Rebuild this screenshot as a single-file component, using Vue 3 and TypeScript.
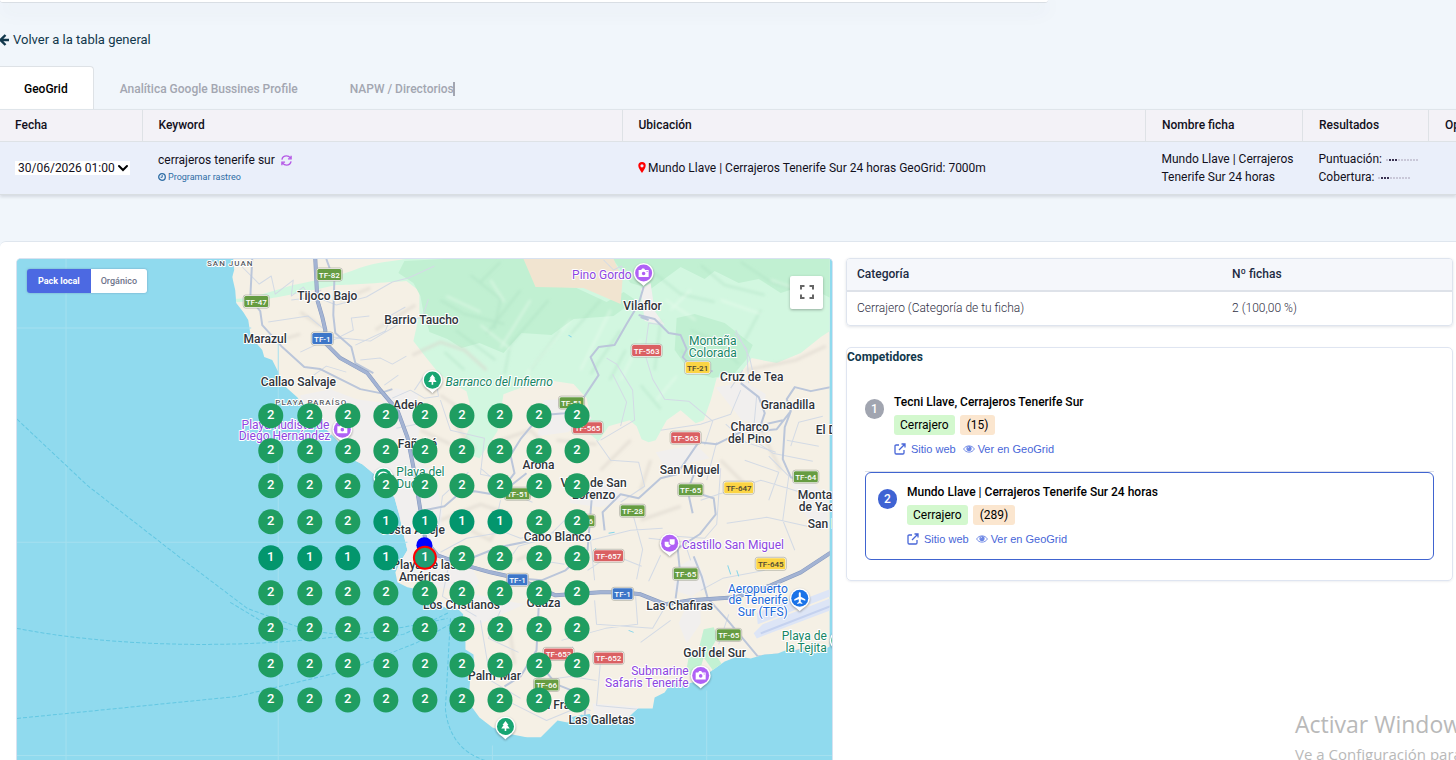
<script setup lang="ts">
import { ref } from 'vue'

interface Label { t: string; x: number; y: number; k?: string; a?: 'start' | 'middle' | 'end'; s?: number }
interface Shield { t: string; x: number; y: number; c: 'green' | 'blue' | 'red' | 'yellow' }
interface Poi { x: number; y: number; kind: 'tree' | 'camera' | 'mask' | 'plane' | 'beach' }
interface Rival { pos: number; name: string; category: string; reviews: number; own: boolean }

const mode = ref<'local' | 'organic'>('local')
const date = ref('30/06/2026 01:00')

const rivals: Rival[] = [
  { pos: 1, name: 'Tecni Llave, Cerrajeros Tenerife Sur', category: 'Cerrajero', reviews: 15, own: false },
  { pos: 2, name: 'Mundo Llave | Cerrajeros Tenerife Sur 24 horas', category: 'Cerrajero', reviews: 289, own: true },
]

const xs = [270, 309, 347, 385, 424, 461, 499, 538, 576]
const ys = [415, 450, 485, 521, 557, 592, 628, 664, 699]
const ranks = [
  '222222222', '222222222', '222222222', '222111122', '111112222',
  '222222222', '222222222', '222222222', '222222222',
]
const pins = ranks.flatMap((row, r) =>
  [...row].map((n, c) => ({ x: xs[c], y: ys[r], n, center: r === 4 && c === 4 })))

const labels: Label[] = [
  { t: 'SAN JUAN', x: 230, y: 266, k: 'area', a: 'middle' },
  { t: 'Tijoco Bajo', x: 327, y: 300 },
  { t: 'Barrio Taucho', x: 421, y: 324 },
  { t: 'Marazul', x: 265, y: 343 },
  { t: 'Callao Salvaje', x: 298, y: 386 },
  { t: 'PLAYA PARAÍSO', x: 311, y: 405, k: 'area' },
  { t: 'Adeje', x: 408, y: 409 },
  { t: 'Fañabé', x: 417, y: 448 },
  { t: 'Arona', x: 538, y: 469 },
  { t: 'Valle de San', x: 593, y: 487 },
  { t: 'Lorenzo', x: 593, y: 499 },
  { t: 'Costa Adeje', x: 412, y: 534 },
  { t: 'Cabo Blanco', x: 557, y: 541 },
  { t: 'Playa de las', x: 424, y: 569 },
  { t: 'Américas', x: 424, y: 581 },
  { t: 'Los Cristianos', x: 461, y: 609 },
  { t: 'Guaza', x: 543, y: 607 },
  { t: 'Palm-Mar', x: 494, y: 680 },
  { t: 'El Fraile', x: 561, y: 709 },
  { t: 'Las Galletas', x: 601, y: 724 },
  { t: 'Vilaflor', x: 642, y: 310 },
  { t: 'Cruz de Tea', x: 751, y: 381 },
  { t: 'Granadilla', x: 787, y: 409 },
  { t: 'Charco', x: 749, y: 431 },
  { t: 'del Pino', x: 749, y: 443 },
  { t: 'El Desierto', x: 815, y: 434, a: 'start' },
  { t: 'San Miguel', x: 689, y: 474 },
  { t: 'Montaña', x: 797, y: 499, a: 'start' },
  { t: 'de Yaco', x: 798, y: 511, a: 'start' },
  { t: 'San Isidro', x: 807, y: 528, a: 'start' },
  { t: 'Las Chafiras', x: 679, y: 610 },
  { t: 'Golf del Sur', x: 714, y: 657 },
  { t: 'Pino Gordo', x: 631, y: 279, k: 'violet', a: 'end' },
  { t: 'Playa nudista de', x: 329, y: 429, k: 'violet', a: 'end' },
  { t: 'Diego Hernández', x: 330, y: 440, k: 'violet', a: 'end' },
  { t: 'Castillo San Miguel', x: 681, y: 549, k: 'violet', a: 'start' },
  { t: 'Submarine', x: 688, y: 675, k: 'violet', a: 'end' },
  { t: 'Safaris Tenerife', x: 688, y: 687, k: 'violet', a: 'end' },
  { t: 'Barranco del Infierno', x: 445, y: 386, k: 'park slanted', a: 'start' },
  { t: 'Playa del', x: 396, y: 476, k: 'park', a: 'start' },
  { t: 'Duque', x: 396, y: 488, k: 'park', a: 'start' },
  { t: 'Montaña', x: 712, y: 345, k: 'park' },
  { t: 'Colorada', x: 712, y: 357, k: 'park' },
  { t: 'Playa de', x: 826, y: 640, k: 'park', a: 'end' },
  { t: 'la Tejita', x: 826, y: 652, k: 'park', a: 'end' },
  { t: 'Aeropuerto', x: 787, y: 593, k: 'air', a: 'end' },
  { t: 'de Tenerife', x: 787, y: 604, k: 'air', a: 'end' },
  { t: 'Sur (TFS)', x: 787, y: 616, k: 'air', a: 'end' },
]

const shields: Shield[] = [
  { t: 'TF-82', x: 329, y: 274, c: 'green' },
  { t: 'TF-47', x: 256, y: 301, c: 'green' },
  { t: 'TF-1', x: 322, y: 338, c: 'blue' },
  { t: 'TF-563', x: 646, y: 350, c: 'red' },
  { t: 'TF-21', x: 697, y: 367, c: 'yellow' },
  { t: 'TF-51', x: 571, y: 402, c: 'green' },
  { t: 'TF-565', x: 587, y: 427, c: 'red' },
  { t: 'TF-563', x: 685, y: 437, c: 'red' },
  { t: 'TF-64', x: 805, y: 476, c: 'green' },
  { t: 'TF-65', x: 690, y: 489, c: 'green' },
  { t: 'TF-647', x: 738, y: 487, c: 'yellow' },
  { t: 'TF-51', x: 517, y: 493, c: 'green' },
  { t: 'TF-28', x: 632, y: 510, c: 'green' },
  { t: 'TF-66', x: 582, y: 520, c: 'green' },
  { t: 'TF-657', x: 608, y: 555, c: 'red' },
  { t: 'TF-645', x: 770, y: 563, c: 'yellow' },
  { t: 'TF-65', x: 685, y: 573, c: 'green' },
  { t: 'TF-1', x: 517, y: 579, c: 'blue' },
  { t: 'TF-1', x: 622, y: 593, c: 'blue' },
  { t: 'TF-65', x: 728, y: 634, c: 'green' },
  { t: 'TF-653', x: 558, y: 653, c: 'red' },
  { t: 'TF-652', x: 608, y: 657, c: 'red' },
  { t: 'TF-66', x: 546, y: 684, c: 'green' },
]

const pois: Poi[] = [
  { x: 643, y: 273, kind: 'camera' },
  { x: 342, y: 429, kind: 'camera' },
  { x: 432, y: 380, kind: 'tree' },
  { x: 383, y: 477, kind: 'beach' },
  { x: 669, y: 543, kind: 'mask' },
  { x: 799, y: 598, kind: 'plane' },
  { x: 700, y: 675, kind: 'camera' },
  { x: 505, y: 726, kind: 'tree' },
  { x: 839, y: 640, kind: 'beach' },
]

const shieldWidth = (t: string) => (t.length === 4 ? 20 : t.length === 5 ? 24 : 29)
</script>

<template>
  <div class="page">
    <div class="upper-card"></div>

    <a class="back" href="#">
      <svg width="10" height="12" viewBox="0 0 10 12" aria-hidden="true"><path d="M5.500 1 .5 6l5 5M1 6h8" fill="none" stroke="currentColor" stroke-width="2.4" /></svg>
      <span>Volver a la tabla general</span>
    </a>

    <nav class="tabs">
      <button class="tab active" type="button">GeoGrid</button>
      <button class="tab" type="button">Analítica Google Bussines Profile</button>
      <button class="tab caret" type="button">NAPW / Directorios</button>
    </nav>

    <div class="scans-wrap">
      <table class="scans">
        <colgroup><col class="c-date"><col class="c-key"><col><col class="c-name"><col class="c-res"><col class="c-opt"></colgroup>
        <thead>
          <tr><th>Fecha</th><th>Keyword</th><th>Ubicación</th><th>Nombre ficha</th><th>Resultados</th><th>Opciones</th></tr>
        </thead>
        <tbody>
          <tr>
            <td>
              <span class="date-box">
                <select v-model="date" aria-label="Fecha"><option>30/06/2026 01:00</option></select>
                <svg width="12" height="8" viewBox="0 0 12 8" aria-hidden="true"><path d="m2 2 4 4 4-4" fill="none" stroke="#000" stroke-width="2" stroke-linecap="round" /></svg>
              </span>
            </td>
            <td>
              <div class="keyword">
                cerrajeros tenerife sur
                <svg width="11" height="11" viewBox="0 0 12 12" aria-hidden="true"><path d="M1 5C1.500 2.500 3.500 1 6 1c1.800 0 3.200.8 4.200 2.200M11 .8v3.400H7.600M11 7c-.5 2.500-2.500 4-5 4-1.800 0-3.200-.8-4.200-2.200M1 11.200V7.800h3.400" fill="none" stroke="#b558e6" stroke-width="1.500" /></svg>
              </div>
              <a class="schedule" href="#">
                <svg width="8" height="8" viewBox="0 0 8 8" aria-hidden="true"><circle cx="4" cy="4" r="3.300" fill="none" stroke="currentColor" stroke-width="1.300" /><path d="M4.200 2v2.300H2.600" fill="none" stroke="currentColor" /></svg>
                Programar rastreo
              </a>
            </td>
            <td>
              <span class="place">
                <svg width="8" height="11" viewBox="0 0 8 11" aria-hidden="true"><path fill-rule="evenodd" d="M4 0a3.700 3.700 0 0 1 3.700 3.700C7.700 6 5.500 8.500 4 11 2.500 8.500.3 6 .3 3.700A3.700 3.700 0 0 1 4 0zm0 2.200a1.600 1.600 0 1 0 0 3.200 1.600 1.600 0 0 0 0-3.200z" fill="#f00" /></svg>
                <span>Mundo Llave | Cerrajeros Tenerife Sur 24 horas GeoGrid: 7000m</span>
              </span>
            </td>
            <td>Mundo Llave | Cerrajeros Tenerife Sur 24 horas</td>
            <td>
              <div v-for="r in ['Puntuación:', 'Cobertura:']" :key="r" class="result">
                {{ r }}
                <svg width="32" height="4" viewBox="0 0 32 4" aria-hidden="true">
                  <rect v-for="i in 11" :key="i" :x="(i - 1) * 3" y="1" width="2" height="2" :fill="i > 1 && i < 5 ? '#3b3352' : '#c9c8d8'" />
                </svg>
              </div>
            </td>
            <td></td>
          </tr>
        </tbody>
      </table>
    </div>

    <main class="board">
      <section class="map">
        <svg class="canvas" viewBox="17 259 815 501" preserveAspectRatio="xMinYMin slice" role="img" aria-label="Mapa de Tenerife Sur">
          <defs>
            <filter id="soft" x="-5%" y="-5%" width="110%" height="110%"><feGaussianBlur stdDeviation="1.500" /></filter>
            <clipPath id="land">
              <path d="M233 259l1 11-2 7 3 13 1 13 7 9 5 8 2 13 6 10 6 7 2 7 8 3 6 12 2 10 8 7 9 8 8 12 15 14 18 18 14 18 10 5 12 10 12 14 8 9 5 18 3 14 5 21-6 10-6 12 2 10 10 5 10 2 12 8 8 7 10 4 8-2 8 8-1 15 3 8v12l8 5 1 12-4 8-1 15 2 17 8 11 13 10 20 7 15 3h13l10-10 7-7 10 2 14-8 12 4 8-2 13 1 6 7 17-16h15l2-11 10-5 6-9h17l10-2 13-10 14-10 13-5 13 2 14-4 13-1 10-4 17 1 11 3 14-7V250H233z" />
            </clipPath>
          </defs>
          <rect x="0" y="240" width="860" height="540" fill="#90daee" />
          <g clip-path="url(#land)">
            <rect x="220" y="250" width="640" height="520" fill="#f5f0e5" />
            <path class="mint" d="M232 299c22 0 42-9 61-14 24-5 48-9 66-17 18-6 34-7 46-9h430v68l-15 10-20 16-24 10-25-5-11 15-24 5-6 22-7 20-8 3-15-13-14 10-11 20-7 2-7-3-5-13-7-6-21 6-10 15-12-10 3-20-3-13-13-14-20-3-34 7-16 6-6 37-18 27-20-7 14-33-7-27-13-7-14-10-13-16-13-17 6-27v-23l-13-10c-30 2-56 4-70 4-32 7-50 11-70 14-12 3-24 3-34 3z" />
            <path class="mint deep" d="M404 261l40-2h80l12 26 40 3 30 14 17-10 12 8-22 16-40 3-22 16-30-2-18 20-24-10-18 5-14-9-18-7-6-20-3-16-7-13-15-10z" />
            <path class="mint deep" d="M612 259h220v40l-28-14-24 8-22-14-20 4-24-12-10 8-24-12-30 22-20-6zM676 318l18-4 30 9 28 22-6 14-12 14-22 5-24-8-14-20z" />
            <path d="M523 259h90l9 20-2 25-37-16-48-1z" fill="#f1e4d0" />
            <path d="M366 410l9 1 2 15-4 12-12 7-6-12 7-12zM703 629l10-2 4 10-6 10 12 20-10 4-10-14-6 20-12-4 3-16 10-8z" fill="#c3f1d3" />
            <g fill="#f1efee">
              <path d="M300 395l30-6 26 10 30 4 22 0 14 12-6 30 12 30 4 40-10 28 12 24-20 8-26-10-4-32-9-28-30-30-40-40zM402 470l30-3 10 45-3 40 30 10 10 20-10 10-38-6-26-20zM380 398l16-10 22 6-4 24-18-2zM543 400l32-2 16 20-24 14-30 4zM566 484l44-3 14 18-24 8-30-4zM640 289l10-6 4 28 10 14-20-4zM675 568l20-12 12 30-16 10-18-6zM690 596l10 3 0 24-14 20-8-20zM715 387l30-5 20 12-4 30-20-4zM592 703l46 3-3 12-16 12-24-10zM655 452l40-8 14 14-44 10z" />
              <path d="M790 482l20-3 16 20 0 26-20-8zM440 604l34-10 50 10-40 18-20 5z" />
            </g>
            <g filter="url(#soft)" fill="none" stroke="#d9d3ca" stroke-opacity=".55" stroke-width="3">
              <path d="M412 355l28-13 24 8 22 20M375 330l40-25M340 300l30-12M300 312l20 14M440 395l32 22M500 440l30-10 20 20M490 620l20 14 4 30M516 560l30-14M440 520l40-16 30 10M455 425l20 24M600 470l30-30M650 460l-10 30M560 540l30-20M720 460l30 30M760 430l20 40M640 520l40-14M556 440l40 4M745 370l50-10 30-14M470 530l20 10 10-20M280 340l20-6M420 430l30 14" />
            </g>
            <g filter="url(#soft)" fill="none" stroke="#a7dcbc" stroke-opacity=".45" stroke-width="2">
              <path d="M440 300l24 14 40 10M470 275l30 24-6 30M520 290l-34 44M548 300l-38 44-6 30M560 330l-30 40M600 300l-30 34M620 330l-30 44M650 270l30 24 34 8M700 265l24 20 40 10M740 262l30 20 50 16M690 330l24 10 24 24M680 350l20 20M760 310l-16 30M660 320l-6 50M625 350l-16 30M640 385l20 24M500 262l-20 20M455 330l40 30M444 352l20 18" />
            </g>
            <g filter="url(#soft)" fill="none" stroke="#effdf2" stroke-opacity=".5" stroke-width="2">
              <path d="M446 296l34 16M480 325l30 24M530 300l-30 48M570 320l-44 54M610 310l-30 60M665 300l30 20M720 300l40 14M770 280l40 14M690 290l-20 20M640 340l-20 40M676 376l-20 24M490 280l14 22" />
            </g>
            <g class="minor">
              <path d="M239 264l20 20 12-8 4 18 18-14-2 16 12-9 6 9 12-6M291 300l25-3 20 8 30-8 26-15 16-4 26-12M268 322l40-6 18 15M300 352l32-15 38 4 30-18 22-6 6-18M333 340l20-10-2-12 18-2M355 345l30-14 6-16 14-8M346 372l-20-6-14 10M360 360l20-2 12 6 14-8M392 398l18-8 14 8 14-2-2-14-14-4-8 12M384 385l14-10M420 406l-4 18-20 4M440 400l10 30 34 8-4 36 28 6M468 472l-26 24-4 30M480 468l28 24 24 10M500 500l-6 28 26 10 36-6M508 560l10-14 28-8 20-20M440 552l26-14 36-6M596 440l14 20 28 2 6 24-24 16M600 440l34-20-2-30-16-26-10-6M648 323l-4 30 8 26 12 20 24 2 24 20-8 24M648 323l14 2M660 430l40-6 30-10 10-24M725 424l20 18 30 10M716 442l-10 38M744 460l34 12-10 28M700 500l60-20 40 12M768 456l20 20-6 44 12 30M720 468l-4 56-12 14-30-2M726 523l40-6 54 12M590 540l4 40M590 540l40-10 32-2M632 513l10 36-6 30M587 570l24-16 30 12M660 555l-12 26M690 560l-6-18-36-4M640 642l30-22M594 600l2 24 56 4 14-24M561 640l44-12 32-4-2-28M572 646l-2 30-30 4M600 660l-4 45 44 4M570 676l26 4M700 590l22-12 42-8M728 614l-10 30M500 610l-12 28 30 14M480 620l10 60 30 18M506 700l40 20 24-10M560 700l30 10" />
              <path d="M603 260l10 10 8-4 4 12 14-6M735 330l14 28 4 18M748 383l-2-34-12-16M742 370l-12 18M822 416l-24 6-8 24M818 446l-32-6M612 374l14 28-6 24M756 395l-4 44 20 14 40 8M538 560l26 4M448 566l-6 30 34 20" />
            </g>
            <g class="road">
              <path d="M252 259l-2 40 10 12 2 14 20 22 22 20 16 2 24 12 16 8 20 4 12-4" />
              <path d="M326 259l8 22-1 34 2 18 16 14 4 16 18 10" />
              <path d="M643 287l-5 17-12 20-12 21-16 2-8 10 8 18-16 24-18 14-24 2-20 24-10 16 4 18-14 18M638 315l16 4 14 14 12 2 6 14-4 8 8 8 10 8 12-2M640 317l8 3" />
              <path d="M740 383l18 14 6 16-6 18 18-2 14-18-4-12 8-12 16 4 20-4M790 411l-6 16-2 32 8 18 12 4M782 420l-34 8-32 16-18-2-22 32-16 4-22 20-18-4-18 18 2 18M695 470l-8 20 26 8 2 16-16 20-22 14 2 20-4 30M688 495l4 18M693 556l8 20 6 22 20 22 30 36 30-3 32-10" />
              <path d="M591 500l-4 50-22 20-24 10-24-2M540 582l-2 28-2 40-16 26-16 10M536 660l20 24 30 12-2 20M424 510l20-4 14-12 16-3 24 4 28-22M468 559l30-12 30-6" />
            </g>
            <path class="highway edge" d="M315 259l2 41 5 17 3 13v13l15 15 27 15 13 17 17 20 10 27 6 30 7 43 5 30 12 15 28 10 25 7 27 6 38 17 45-3h22l18 2 25 10 25-4 45-3 35-12 30-13 32-21" />
            <path class="highway" d="M315 259l2 41 5 17 3 13v13l15 15 27 15 13 17 17 20 10 27 6 30 7 43 5 30 12 15 28 10 25 7 27 6 38 17 45-3h22l18 2 25 10 25-4 45-3 35-12 30-13 32-21" />
            <path d="M753 633l9-9 70-27v12l-76 29zM757 624l75-29 2-8-26 10-10-2-42 18z" fill="#dde5f6" />
            <path d="M760 633l72-28" fill="none" stroke="#c5d2ef" stroke-width="2" />
            <path d="M568 335l3 2M727 565l3 9M736 570l2 6M608 533l6-1M595 548v3M628 630l5 2M571 717l18-3 3 7h-16z" stroke="#82d5ea" fill="#82d5ea" />
          </g>
          <path class="grid-line" d="M66 259v501M278 340v420M492 745v15M706 690v70M17 328h234M17 542h390M17 755h815" />
          <g class="ferry">
            <path d="M17 419l70 66 90 70 70 53 60 22 60 8 36-4 46-22M17 628c80 16 250 30 430-10M17 718l220-22 110-26 70-28 36-20M450 618l-5 90c2 24 14 44 40 52M230 602l30 18 30 10" />
          </g>

          <g v-for="s in shields" :key="s.t + s.x" :class="['shield', s.c]">
            <rect :x="s.x - shieldWidth(s.t) / 2 - 1" :y="s.y - 6" :width="shieldWidth(s.t) + 2" height="13" rx="2.500" class="rim" />
            <rect :x="s.x - shieldWidth(s.t) / 2" :y="s.y - 5" :width="shieldWidth(s.t)" height="11" rx="1.500" class="plate" />
            <text :x="s.x" :y="s.y + 4" text-anchor="middle">{{ s.t }}</text>
          </g>

          <g v-for="p in pois" :key="p.x" :class="['poi', p.kind]" :transform="`translate(${p.x} ${p.y})`">
            <path class="drop" d="M0 13c-2-3-10-5.500-10-13a10 10 0 0 1 20 0c0 7.500-8 10-10 13z" />
            <circle r="8.500" />
            <path v-if="p.kind === 'tree'" d="M0-5.500 3-1.500H1.800L4.200 2H.8v2.500H-.8V2h-3.400l2.400-3.500H-3z" fill="#fff" />
            <path v-else-if="p.kind === 'camera'" fill-rule="evenodd" d="M-5-3h2.500l1-1.500h2L1.500-3H5v7H-5zM0-1.300A1.800 1.800 0 1 0 0 2.300 1.800 1.800 0 0 0 0-1.300zM3-2v1h1v-1z" fill="#fff" />
            <path v-else-if="p.kind === 'mask'" d="M0-4h5v4c0 2-4 2-5 0zM-5-1.500h4V1l2 1c-1 3-6 2.500-6-.5z" fill="#fff" />
            <path v-else-if="p.kind === 'plane'" d="M0-6c.7 0 1 .7 1 1.500v2.800L5.500 1v1.400L1 1v2.600l1.500 1.100v1L0 5l-2.500.7v-1L-1 3.600V1l-4.500 1.400V1L-1-1.700v-2.800C-1-5.300-.7-6 0-6z" fill="#fff" />
            <path v-else d="M-5 0a5 5 0 0 1 9-3zM0-1l3 5h-5" fill="none" stroke="#fff" stroke-width="1.400" />
          </g>

          <text v-for="l in labels" :key="l.t + l.x" :x="l.x" :y="l.y" :text-anchor="l.a ?? 'middle'" :class="['label', l.k]">{{ l.t }}</text>

          <circle cx="424" cy="545" r="8" fill="#00f" />
          <g v-for="p in pins" :key="`${p.x}-${p.y}`" :class="['pin', { best: p.n === '1', center: p.center }]">
            <circle :cx="p.x + 0.5" :cy="p.y + 0.5" :r="p.center ? 11 : 12.5" />
            <text :x="p.x + 0.5" :y="p.y + 4" text-anchor="middle">{{ p.n }}</text>
          </g>
        </svg>

        <div class="switch">
          <button type="button" :class="{ on: mode === 'local' }" @click="mode = 'local'">Pack local</button>
          <button type="button" :class="{ on: mode === 'organic' }" @click="mode = 'organic'">Orgánico</button>
        </div>
        <button class="full" type="button" aria-label="Pantalla completa">
          <svg width="16" height="16" viewBox="0 0 16 16" aria-hidden="true"><path d="M2 5.500V2h3.500M10.500 2H14v3.500M14 10.500V14h-3.500M5.500 14H2v-3.500" fill="none" stroke="#666" stroke-width="2" /></svg>
        </button>
      </section>

      <aside class="side">
        <div class="cat-card">
          <table class="cats">
            <thead><tr><th>Categoría</th><th>Nº fichas</th></tr></thead>
            <tbody><tr><td>Cerrajero (Categoría de tu ficha)</td><td>2 (100,00 %)</td></tr></tbody>
          </table>
        </div>

        <section class="rivals">
          <h2>Competidores</h2>
          <ul>
            <li v-for="r in rivals" :key="r.pos" :class="{ own: r.own }">
              <span class="pos">{{ r.pos }}</span>
              <div class="info">
                <strong>{{ r.name }}</strong>
                <div class="tags"><span class="tag cat">{{ r.category }}</span><span class="tag num">({{ r.reviews }})</span></div>
                <div class="links">
                  <a href="#">
                    <svg width="12" height="12" viewBox="0 0 12 12" aria-hidden="true"><path d="M5 2H2.200Q1 2 1 3.200v6.600Q1 11 2.200 11h6.600Q10 11 10 9.800V7M7.500 1H11v3.500M11 1 5 7" fill="none" stroke="currentColor" stroke-width="1.300" /></svg>
                    Sitio web
                  </a>
                  <a href="#">
                    <svg width="12" height="8" viewBox="0 0 12 8" aria-hidden="true"><path d="M.6 4C3-.2 9-.2 11.400 4 9 8.200 3 8.200.6 4z" fill="none" stroke="#7b93e8" stroke-width="1" /><circle cx="6" cy="3.600" r="2.600" fill="#6c86e4" /><path d="M4.800 3.200Q5 2.200 6 2.200" fill="none" stroke="#fff" stroke-width=".7" /></svg>
                    Ver en GeoGrid
                  </a>
                </div>
              </div>
            </li>
          </ul>
        </section>
      </aside>
    </main>

    <div class="notice">
      <div class="notice-title">Activar Windows</div>
      <div>Ve a Configuración para activar Windows.</div>
    </div>
  </div>
</template>

<style>
body { background: #f1f6fb; }
</style>

<style scoped>
* { box-sizing: border-box; }
.page { position: relative; display: flex; flex-direction: column; height: 100vh; min-height: 700px; overflow: hidden; font: 12px/18px Roboto, "Liberation Sans", sans-serif; color: #12101c; background: #f1f6fb; }
button, select { font: inherit; color: inherit; border: 0; margin: 0; }
a { color: inherit; text-decoration: none; }
.upper-card { flex: none; width: 72%; height: 3px; background: #fff; border-bottom: 1px solid #d9dee4; border-radius: 0 0 6px 6px; box-shadow: 0 5px 20px rgba(60, 70, 120, .16); }
.back { display: flex; align-items: center; gap: 3px; margin-top: 27px; font-size: 13px; line-height: 20px; color: #12384c; }
.tabs { display: flex; margin-top: 16px; height: 43px; }
.tab { padding: 2px 26px 0; background: none; font-weight: 500; color: #a3a6b1; }
.tab.active { padding: 1px 25px 0 24px; background: #fff; color: #000; border: solid #dee2e6; border-width: 1px 1px 0 0; border-radius: 0 4px 0 0; }
.tab.caret::after { content: ""; display: inline-block; width: 2px; height: 14px; margin-left: -1px; background: #a3a6b1; vertical-align: -3px; }
.scans-wrap { flex: none; overflow: hidden; border-top: 1px solid #dfe5ea; box-shadow: 0 2px 3px rgba(40, 50, 70, .14); }
.scans { width: calc(100% + 65px); table-layout: fixed; border-collapse: collapse; }
.scans th, .scans td { padding: 0 16px; text-align: left; vertical-align: middle; }
.scans th:first-child, .scans td:first-child { padding: 0 0 0 15px; }
.scans th { height: 31px; background: #f3f2f7; border-right: 1px solid #dee2e6; border-bottom: 1px solid #dee2e6; font-weight: 500; }
.scans td { height: 53px; background: #eaeffa; border-bottom: 1px solid #d9dee2; }
.scans td:nth-child(4) { padding-right: 8px; }
.c-date { width: 142px; }
.c-key { width: 480px; }
.c-name { width: 157px; }
.c-res { width: 126px; }
.c-opt { width: 92px; }
.date-box { display: inline-flex; align-items: center; gap: 2px; padding-left: 3px; width: 115px; height: 14px; background: #fff; vertical-align: middle; }
.date-box select { appearance: none; background: none; padding: 0; height: 14px; line-height: 14px; }
.keyword { line-height: 18px; }
.keyword svg { margin-left: 3px; vertical-align: -2px; }
.schedule { display: flex; align-items: center; gap: 2px; font-size: 9px; line-height: 16px; color: #2e6da4; }
.place { display: flex; align-items: center; gap: 2px; }
.result { white-space: nowrap; }
.result svg { vertical-align: 1px; margin-left: 1px; }
.board { flex: 1; min-height: 0; display: grid; grid-template-columns: minmax(0, 817fr) minmax(0, 607fr); gap: 13px; margin-top: 46px; padding: 16px 3px 0 16px; background: #fff; border-top: 1px solid #dfe6ee; border-radius: 6px 0 0 0; }
.map { position: relative; overflow: hidden; border: 1px solid #d8e2f0; border-bottom: 0; border-radius: 5px 5px 0 0; background: #90daee; }
.canvas { display: block; width: 100%; height: 100%; }
.mint { fill: #d2f7e0; }
.mint.deep { fill: #c1f0d2; }
.minor { fill: none; stroke: #d3dae5; stroke-width: 1; stroke-linejoin: round; }
.road { fill: none; stroke: #bbc6da; stroke-width: 2; stroke-linejoin: round; }
.highway { fill: none; stroke: #a3b3d3; stroke-width: 3; stroke-linejoin: round; }
.highway.edge { stroke: #8598bd; stroke-width: 4; }
.grid-line { fill: none; stroke: #a5e0ef; stroke-width: 1; }
.ferry { fill: none; stroke: #63c7e2; stroke-width: 1; stroke-dasharray: 4 2; }
.shield .rim { fill: #fff; stroke: #9b9b8b; stroke-width: .6; }
.shield text { font: 500 8px Roboto, sans-serif; fill: #fff; }
.shield.green .plate { fill: #669c42; }
.shield.blue .plate { fill: #3d76c8; }
.shield.red .plate { fill: #da6062; }
.shield.yellow .plate { fill: #fbd444; }
.shield.yellow text { fill: #4b4533; }
.label { font: 500 12px Roboto, sans-serif; fill: #30343a; stroke: #fff; stroke-width: 2px; stroke-linejoin: round; paint-order: stroke; }
.label.area { font-size: 8px; letter-spacing: 1px; fill: #565b63; }
.label.violet { font-weight: 400; fill: #8d46e0; }
.label.park { font-weight: 400; fill: #168564; }
.label.slanted { font-style: italic; }
.label.air { font-weight: 400; fill: #1a68d8; }
.poi .drop { fill: #fff; filter: drop-shadow(0 1px 1px rgba(0, 0, 0, .35)); }
.poi circle { fill: #b061f5; }
.poi.tree circle, .poi.beach circle { fill: #18a572; }
.poi.plane circle { fill: #1a73e8; }
.pin circle { fill: #1f9d61; }
.pin text { font: 500 13px Roboto, sans-serif; fill: #fff; }
.pin.best circle { fill: #03966d; }
.pin.center circle { fill: #1f9d72; stroke: #f00; stroke-width: 2; }
.switch { position: absolute; left: 10px; top: 10px; display: flex; border-radius: 3px; overflow: hidden; box-shadow: 0 0 2px rgba(80, 90, 140, .5); }
.switch button { height: 24px; padding: 0 10px; background: #fff; font-size: 9px; font-weight: 500; color: #6d7389; }
.switch .on { padding: 0 11px; background: #4c69e2; color: #fff; font-weight: 700; }
.full { position: absolute; right: 9px; top: 17px; width: 33px; height: 33px; padding: 0; display: grid; place-items: center; background: #fff; border-radius: 2px; box-shadow: 0 1px 3px rgba(0, 0, 0, .3); }
.cat-card { border: 1px solid #dee4ee; border-radius: 4px; overflow: hidden; box-shadow: 0 1px 3px rgba(50, 60, 90, .15); }
.cats { width: 100%; table-layout: fixed; border-collapse: collapse; }
.cats th, .cats td { padding: 0 10px; text-align: left; }
.cats th { height: 32px; font-weight: 500; color: #1d2b42; background: #f5f7fb; border-bottom: 2px solid #dee2e9; }
.cats td { height: 34px; font-weight: 300; color: #2f2f44; }
.cats th:first-child { width: 62%; }
.rivals { margin-top: 21px; padding-bottom: 20px; border: 1px solid #dfe5f1; border-radius: 5px; box-shadow: 0 1px 2px rgba(50, 60, 90, .08); }
h2 { margin: 0; font-size: 12px; line-height: 18px; font-weight: 700; color: #12384c; }
ul { list-style: none; margin: 19px 18px 0; padding: 0; }
li { display: flex; gap: 10px; padding: 8px 0 12px; border-bottom: 1px solid #dfe2ea; }
li.own { padding: 10px 12px; border: 1px solid #4064d0; border-radius: 6px; }
.pos { flex: none; margin-top: 6px; width: 19px; height: 20px; border-radius: 10px; background: #a1a5b0; color: #fff; font-weight: 500; line-height: 20px; text-align: center; }
.own .pos { background: #3f63d3; }
strong { display: block; font-weight: 500; line-height: 18px; color: #000; }
.tags { display: flex; gap: 5px; margin: 4px 0; }
.tag { padding: 0 7px; height: 20px; line-height: 20px; border-radius: 3px; color: #000; }
.tag.cat { padding: 0 6px; background: #d3f8ce; }
.tag.num { background: #fbe6cf; }
.links { display: flex; gap: 7px; font: 11px/20px "Liberation Sans", Arial, sans-serif; color: #4866d8; }
.links a { display: flex; align-items: center; gap: 5px; }
.links a:last-child { gap: 3px; }
.notice { position: absolute; left: calc(100% - 161px); bottom: -5px; white-space: nowrap; font: 15px/22px "Open Sans", "Noto Sans", sans-serif; color: #b9b9b9; pointer-events: none; }
.notice-title { font-size: 23px; line-height: 38px; }
</style>
